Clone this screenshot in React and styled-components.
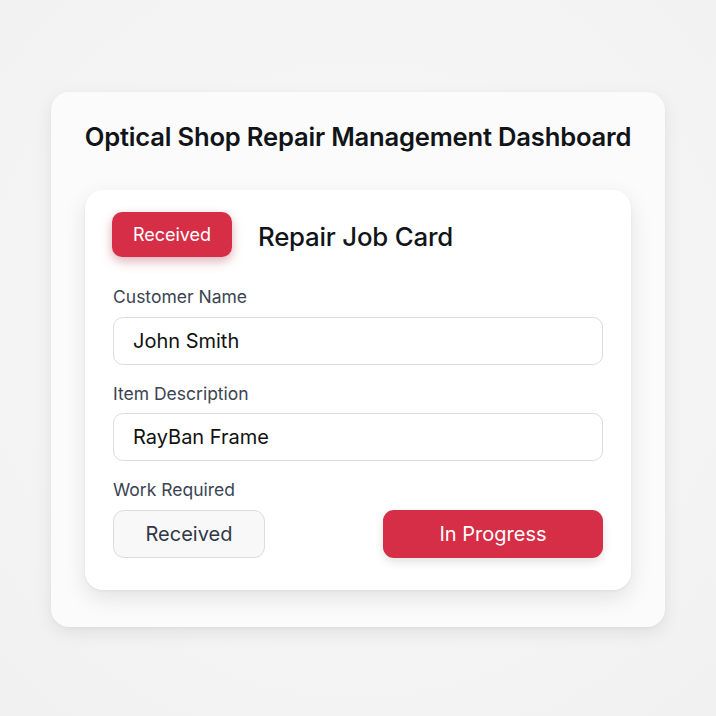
import React from "react";
import styled, { createGlobalStyle } from "styled-components";

const Global = createGlobalStyle`
  html, body { margin: 0; padding: 0; background: #f3f3f3; }
  body { font-family: Inter, "Noto Sans", sans-serif; -webkit-font-smoothing: antialiased; }
  * { box-sizing: border-box; }
`;

const Page = styled.div`
  width: 716px;
  height: 716px;
  padding: 92px 51px 0 51px;
  background: radial-gradient(circle at 50% 45%, #f8f8f8 0%, #f1f1f1 100%);
`;

const Outer = styled.div`
  background: #fbfbfb;
  border-radius: 18px;
  box-shadow: 0 6px 18px rgba(0, 0, 0, 0.08), 0 1px 3px rgba(0, 0, 0, 0.04);
  padding: 26px 34px 37px;
  display: flex;
  flex-direction: column;
  gap: 34px;
`;

const Title = styled.h1`
  margin: 0 -12px;
  white-space: nowrap;
  text-align: center;
  font-size: 25.6px;
  font-weight: 600;
  color: #111418;
  letter-spacing: -0.2px;
  line-height: 38px;
`;

const Card = styled.div`
  background: #ffffff;
  border-radius: 18px;
  box-shadow: 0 8px 22px rgba(0, 0, 0, 0.1), 0 1px 3px rgba(0, 0, 0, 0.05);
  padding: 22px 28px 32px 27px;
  display: flex;
  flex-direction: column;
`;

const Header = styled.div`
  display: flex;
  align-items: center;
  gap: 26px;
  margin-bottom: 29px;
`;

const Badge = styled.div`
  width: 120px;
  height: 45px;
  border-radius: 10px;
  background: #d62e46;
  color: #fff;
  font-size: 18px;
  display: flex;
  align-items: center;
  justify-content: center;
  box-shadow: 0 5px 12px rgba(214, 46, 70, 0.25), 0 3px 8px rgba(0, 0, 0, 0.12);
`;

const CardTitle = styled.h2`
  margin: 0;
  font-size: 25.8px;
  font-weight: 500;
  color: #111418;
  letter-spacing: -0.2px;
  padding-top: 4px;
`;

const Label = styled.div`
  font-size: 17.5px;
  color: #3b4452;
  line-height: 22px;
  margin: 0 0 ${p => p.$gap}px 1px;
`;

const Field = styled.div`
  height: 48px;
  border: 1px solid #dcdcdc;
  border-radius: 10px;
  background: #fff;
  display: flex;
  align-items: center;
  padding: 0 19px;
  font-size: 20px;
  color: #111;
  margin-bottom: 18px;
  margin-left: 1px;
`;

const Actions = styled.div`
  display: flex;
  justify-content: space-between;
  margin-left: 1px;
`;

const Button = styled.div`
  height: 48px;
  width: ${p => p.$w}px;
  border-radius: 11px;
  display: flex;
  align-items: center;
  justify-content: center;
  font-size: 20px;
  background: ${p => (p.$primary ? "#d62e46" : "#f8f8f8")};
  color: ${p => (p.$primary ? "#fff" : "#2f3846")};
  border: ${p => (p.$primary ? "none" : "1px solid #dcdcdc")};
  box-shadow: ${p => (p.$primary ? "0 4px 10px rgba(0,0,0,0.12)" : "none")};
`;

export default function App() {
  return (
    <>
      <Global />
      <Page>
        <Outer>
          <Title>Optical Shop Repair Management Dashboard</Title>
          <Card>
            <Header>
              <Badge>Received</Badge>
              <CardTitle>Repair Job Card</CardTitle>
            </Header>
            <Label $gap={9}>Customer Name</Label>
            <Field>John Smith</Field>
            <Label $gap={8}>Item Description</Label>
            <Field>RayBan Frame</Field>
            <Label $gap={9}>Work Required</Label>
            <Actions>
              <Button $w={152}>Received</Button>
              <Button $w={220} $primary>In Progress</Button>
            </Actions>
          </Card>
        </Outer>
      </Page>
    </>
  );
}
